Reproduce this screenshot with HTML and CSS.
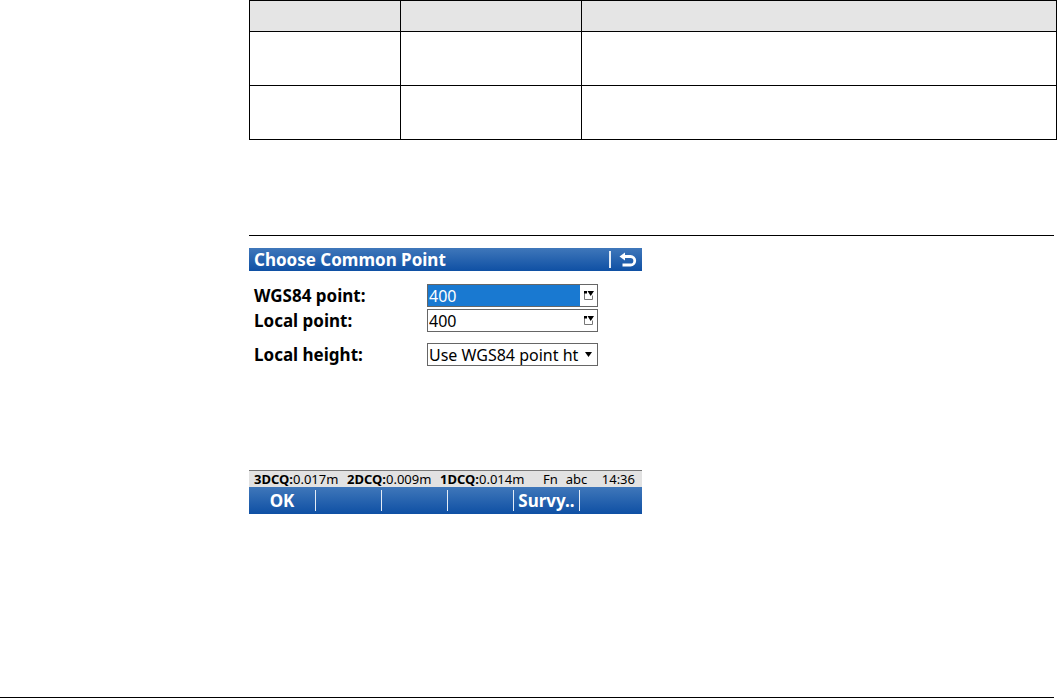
FILE: index.html
```
<!DOCTYPE html>
<html lang="en">
<head>
  <meta charset="UTF-8">
  <meta name="viewport" content="width=device-width, initial-scale=1.0">
  <title>Choose Common Point</title>
  <link rel="stylesheet" href="styles.css">
</head>
<body>
  <main class="content">
    <table class="steps">
      <colgroup>
        <col class="col-step">
        <col class="col-key">
        <col>
      </colgroup>
      <thead>
        <tr><th></th><th></th><th></th></tr>
      </thead>
      <tbody>
        <tr><td></td><td></td><td></td></tr>
        <tr><td></td><td></td><td></td></tr>
      </tbody>
    </table>

    <section class="screen-section">
      <form class="screen">
        <header class="title-bar">
          <h1>Choose Common Point</h1>
          <button type="button" class="back-button" aria-label="Back">
            <svg width="18" height="16" viewBox="0 0 18 16">
              <path d="M4 4.5H11.5a4 4 0 0 1 0 8.5H3.5" fill="none" stroke="#fff" stroke-width="2.8"/>
              <path d="M0.5 4.5L6 0.5V8.5z" fill="#fff"/>
            </svg>
          </button>
        </header>

        <div class="fields">
          <div class="field-row">
            <label for="wgs84-point">WGS84 point:</label>
            <div class="field">
              <input type="text" id="wgs84-point" class="selected" value="400">
              <button type="button" class="pick-button" aria-label="Choose WGS84 point">
                <svg width="11" height="11" viewBox="0 0 11 11">
                  <path d="M1.5 2.5V9.5H9.5V5.5" fill="none" stroke="#777"/>
                  <path d="M1 1h3v2.5H1zM4.5 1h6.5L7.7 6z" fill="#000"/>
                </svg>
              </button>
            </div>
          </div>
          <div class="field-row">
            <label for="local-point">Local point:</label>
            <div class="field">
              <input type="text" id="local-point" value="400">
              <button type="button" class="pick-button" aria-label="Choose local point">
                <svg width="11" height="11" viewBox="0 0 11 11">
                  <path d="M1.5 2.5V9.5H9.5V5.5" fill="none" stroke="#777"/>
                  <path d="M1 1h3v2.5H1zM4.5 1h6.5L7.7 6z" fill="#000"/>
                </svg>
              </button>
            </div>
          </div>
          <div class="field-row spaced">
            <label for="local-height">Local height:</label>
            <div class="field">
              <select id="local-height">
                <option>Use WGS84 point ht</option>
              </select>
              <svg class="arrow" width="7" height="5" viewBox="0 0 7 5">
                <path d="M0 0h7L3.5 5z" fill="#000"/>
              </svg>
            </div>
          </div>
        </div>

        <div class="status-bar">
          <span class="quality"><b>3DCQ:</b>0.017m</span>
          <span class="quality"><b>2DCQ:</b>0.009m</span>
          <span class="quality"><b>1DCQ:</b>0.014m</span>
          <span class="fn">Fn</span>
          <span class="abc">abc</span>
          <span class="time">14:36</span>
        </div>

        <div class="soft-keys">
          <button type="button">OK</button>
          <button type="button" aria-label="F2"></button>
          <button type="button" aria-label="F3"></button>
          <button type="button" aria-label="F4"></button>
          <button type="button">Survy..</button>
          <button type="button" aria-label="F6"></button>
        </div>
      </form>
    </section>
  </main>
  <footer class="page-end"></footer>
</body>
</html>
```
FILE: styles.css
```
* {
  box-sizing: border-box;
}

body {
  display: flex;
  flex-direction: column;
  min-height: 100vh;
  margin: 0;
  background-color: #fff;
  color: #000;
  font-family: "Noto Sans", "Open Sans", sans-serif;
  font-size: 17px;
}

button,
input,
select {
  margin: 0;
  padding: 0;
  border: none;
  border-radius: 0;
  background: none;
  color: inherit;
  font: inherit;
}

.content {
  flex: 1;
  margin-left: 249px;
}

.steps {
  width: 100%;
  table-layout: fixed;
  border-collapse: separate;
  border-spacing: 0;
  border-top: 1px solid #000;
  border-left: 1px solid #000;
}

.steps th,
.steps td {
  height: 54px;
  padding: 0;
  border-right: 1px solid #000;
  border-bottom: 1px solid #000;
}

.steps th {
  height: 31px;
  background-color: #e5e5e5;
}

.col-step {
  width: 151px;
}

.col-key {
  width: 181px;
}

.screen-section {
  margin: 95px 3px 0 0;
  padding-top: 12px;
  border-top: 1px solid #000;
}

.screen {
  width: 393px;
  max-width: 100%;
}

.title-bar {
  display: flex;
  align-items: center;
  justify-content: space-between;
  height: 23px;
  padding: 0 5px;
  background: linear-gradient(#3f77ba, #0f50a4);
  color: #fff;
}

.title-bar h1 {
  margin: 0;
  font-size: 17px;
  line-height: 23px;
}

.back-button {
  display: flex;
  align-items: center;
  height: 17px;
  padding-left: 8px;
  border-left: 2px solid #e4ecf6;
}

.fields {
  display: flex;
  flex-direction: column;
  gap: 2px;
  min-height: 199px;
  padding: 13px 5px 0;
}

.field-row {
  display: flex;
  align-items: center;
}

.field-row.spaced {
  margin-top: 9px;
}

.field-row label {
  width: 173px;
  font-weight: bold;
  line-height: 23px;
}

.field {
  position: relative;
  display: flex;
  width: 171px;
  height: 23px;
  border: 1px solid #666;
  font-size: 16px;
}

.field input {
  flex: 1;
  min-width: 0;
  padding-left: 1px;
}

.field .selected {
  background-color: #1979d1;
  color: #fff;
}

.pick-button {
  display: flex;
  align-items: center;
  justify-content: center;
  width: 17px;
}

.field select {
  width: 100%;
  padding-left: 1px;
  appearance: none;
}

.arrow {
  position: absolute;
  top: 8px;
  right: 5px;
  pointer-events: none;
}

.status-bar {
  display: flex;
  height: 17px;
  padding: 0 7px 0 5px;
  border-top: 1px solid #777;
  background-color: #e2e2e2;
  font-size: 13px;
  line-height: 17px;
  white-space: nowrap;
}

.quality {
  width: 93px;
}

.fn {
  margin-left: 10px;
}

.abc {
  margin-left: 8px;
}

.time {
  margin-left: auto;
}

.soft-keys {
  display: grid;
  grid-template-columns: repeat(5, 66px) 1fr;
  height: 27px;
  padding: 3px 0;
  background: linear-gradient(#3f77ba, #0f50a4);
  color: #fff;
}

.soft-keys button {
  font-weight: bold;
  line-height: 21px;
}

.soft-keys button + button {
  border-left: 1px solid #e4ecf6;
}

.page-end {
  margin-right: 3px;
  border-top: 1px solid #000;
}
```
